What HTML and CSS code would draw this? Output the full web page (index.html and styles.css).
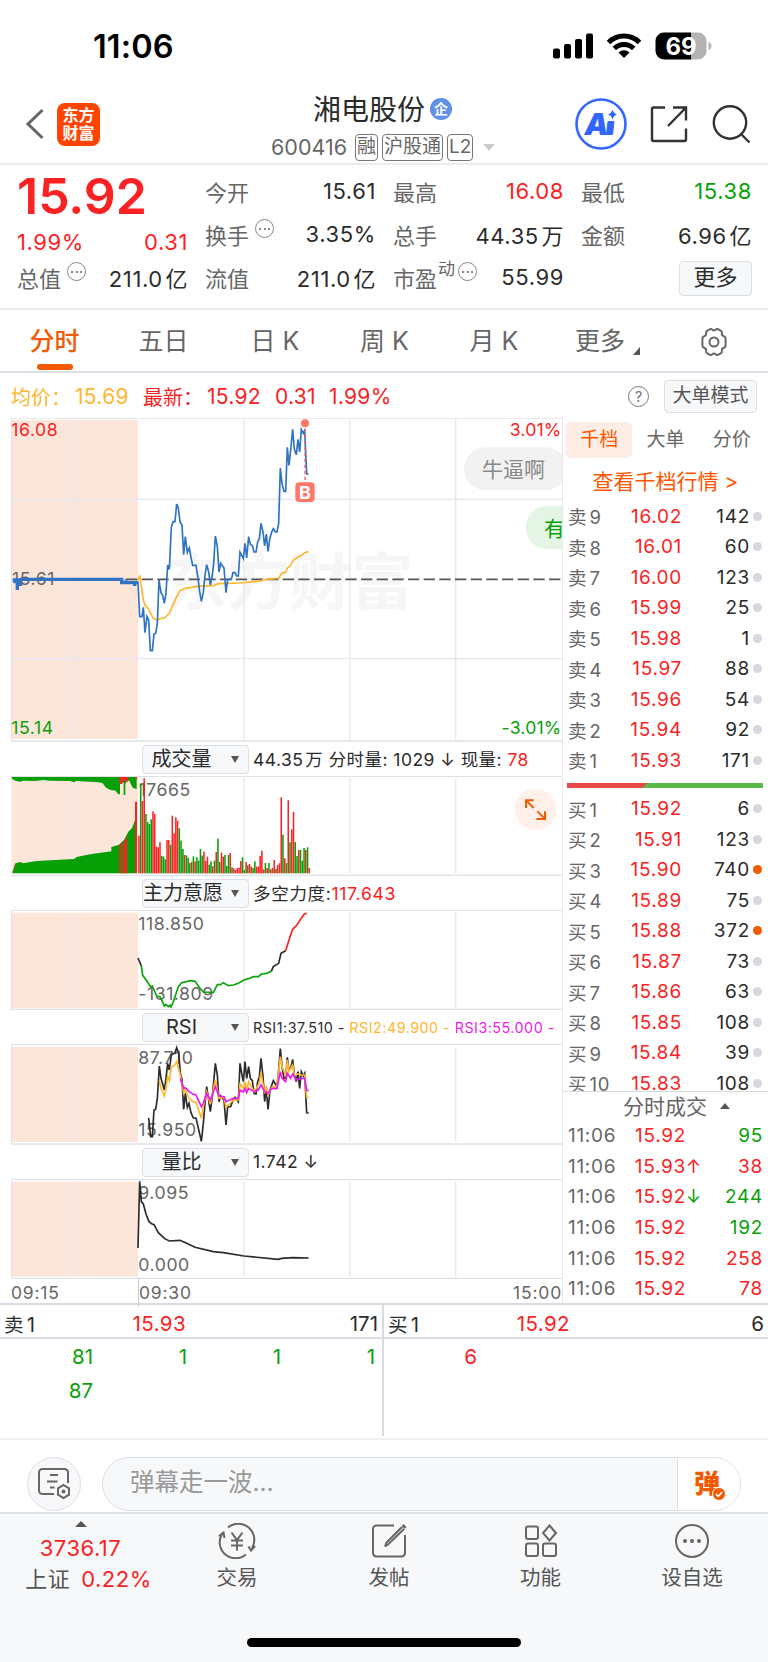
FILE: index.html
```html
<!DOCTYPE html>
<html lang="zh-CN">

<head>
	<meta charset="UTF-8">
	<title>湘电股份 600416</title>
	<link rel="stylesheet" href="styles.css">
</head>

<body>
	<div class="status">
		<span class="clock">11:06</span>
		<div class="status-icons">
			<svg width="40" height="26" viewBox="0 0 40 26">
				<rect x="0" y="15.500" width="7" height="10" rx="2" />
				<rect x="11" y="11" width="7" height="14.500" rx="2" />
				<rect x="22" y="6" width="7" height="19.500" rx="2" />
				<rect x="33" y="0.500" width="7" height="25" rx="2" />
			</svg>
			<svg width="36" height="26" viewBox="0 0 36 26" class="wifi">
				<path d="M2.500 9.500a22 22 0 0 1 31 0" />
				<path d="M8.300 15.500a13.800 13.800 0 0 1 19.400 0" />
				<path d="M18 25l-5.500-5.600a8 8 0 0 1 11 0z" class="solid" />
			</svg>
			<svg width="58" height="28" viewBox="0 0 58 28">
				<path d="M9 .5h34a8.500 8.500 0 0 1 8.500 8.500v10a8.500 8.500 0 0 1-8.500 8.500h-7V.5z" fill="#b3b3b3" />
				<path d="M9 .5h27v27H9A8.500 8.500 0 0 1 .5 19V9A8.500 8.500 0 0 1 9 .5z" />
				<path d="M53.500 10c4 1 4 7 0 8z" fill="#b3b3b3" />
				<text x="26" y="22.500" class="batt">69</text>
			</svg>
		</div>
	</div>

	<div class="head">
		<div class="head-left">
			<svg width="20" height="32" viewBox="0 0 20 32"><path d="M17.500 2L3 16l14.500 14" fill="none" stroke="#666" stroke-width="3" /></svg>
			<div class="logo">东方<br>财富</div>
		</div>
		<div class="head-mid">
			<div class="name">湘电股份<i>企</i></div>
			<div class="code">
				<span>600416</span><b>融</b><b>沪股通</b><b>L2</b>
				<em></em>
			</div>
		</div>
		<div class="head-right">
			<svg width="52" height="52" viewBox="0 0 52 52">
				<circle cx="26" cy="26" r="24.500" fill="none" stroke="#3366ff" stroke-width="2.600" />
				<text x="9.500" y="37" class="ai">A</text>
				<path d="M33 23.500h6l-1.500 13h-6z" fill="#3366ff" stroke="#3366ff" stroke-linejoin="round" />
				<path d="M37.500 11.500q1 4 4.500 5-3.500 1-4.500 5-1-4-4.500-5 3.500-1 4.500-5z" fill="#3366ff" />
			</svg>
			<svg width="38" height="38" viewBox="0 0 38 38" class="line dark">
				<path d="M15 2.500H3.500a1.500 1.500 0 0 0-1.500 1.500v30.500a1.500 1.500 0 0 0 1.500 1.500h31a1.500 1.500 0 0 0 1.500-1.500V23.500M23 2.500h13v13M36 2.500L18 21" />
			</svg>
			<svg width="40" height="40" viewBox="0 0 40 40" class="line dark">
				<circle cx="18" cy="18.500" r="16.200" />
				<path d="M29 30l8.500 8.500" />
			</svg>
		</div>
	</div>

	<div class="quote">
		<div class="price">15.92</div>
		<div class="cell change red"><span>1.99%</span><span>0.31</span></div>
		<div class="cell"><label>总值</label><i class="dots"></i><span>211.0&hairsp;亿</span></div>

		<div class="cell"><label>今开</label><span>15.61</span></div>
		<div class="cell"><label>换手</label><i class="dots"></i><span>3.35%</span></div>
		<div class="cell"><label>流值</label><span>211.0&hairsp;亿</span></div>

		<div class="cell"><label>最高</label><span class="red">16.08</span></div>
		<div class="cell"><label>总手</label><span>44.35&hairsp;万</span></div>
		<div class="cell"><label>市盈</label><sup>动</sup><i class="dots near"></i><span>55.99</span></div>

		<div class="cell"><label>最低</label><span class="green">15.38</span></div>
		<div class="cell"><label>金额</label><span>6.96&hairsp;亿</span></div>
		<div class="cell end"><a class="btn more">更多</a></div>
	</div>

	<div class="tabs">
		<a class="on">分时</a>
		<a>五日</a>
		<a>日 K</a>
		<a>周 K</a>
		<a>月 K</a>
		<a class="drop">更多</a>
		<a class="gear">
			<svg width="30" height="30" viewBox="0 0 30 30" class="line">
				<path d="M11 2.200q1.300-.6 2.200.4 1.800 1.700 3.600 0 .9-1 2.200-.4l3 1.700q1.200.8.900 2.100-.4 2.400 1.900 3.200 1.500.4 1.700 1.800.3 4 0 8-.3 1.400-1.700 1.800-2.300.8-1.900 3.200.3 1.300-.9 2.100l-3 1.700q-1.300.6-2.200-.4-1.800-1.700-3.600 0-.9 1-2.200.4l-3-1.700q-1.200-.8-.9-2.100.4-2.400-1.900-3.200-1.400-.4-1.700-1.800-.3-4 0-8 .3-1.400 1.700-1.800 2.300-.8 1.900-3.200-.3-1.300.9-2.100z" />
				<circle cx="15" cy="15" r="4.500" />
			</svg>
		</a>
	</div>

	<div class="info">
		<span class="avg">均价：</span><span class="avg num">15.69</span>
		<span class="red">最新：</span><span class="red num">15.92</span><span class="red num">0.31</span><span class="red num">1.99%</span>
		<i class="ask">?</i>
		<a class="btn mode">大单模式</a>
	</div>

	<div class="main">
		<div class="charts">
			<!-- 图表坐标统一按 3 倍像素 -->
			<svg class="pane" height="324" viewBox="33 24 1653 972">
				<rect class="pre" x="34" y="30" width="380" height="957" />
				<text x="496" y="584" class="mark">东方财富</text>
				<path class="grid" d="M224 30V987M732 30V987M1050 30V987M1367 30V987M34 268H1686M34 746H1686" />
				<path class="edge" d="M33 24H1686M33 993H1686M34 24V993" />
				<text x="36" y="525" class="lab">15.61</text>
				<path class="dash" d="M378 508H1686" />
				<path class="prel" d="M38 510H62M45 520V512M52 540V512M62 528V512M60 508H365V518H414M378 512V508M404 528V518" />
				<polyline class="avgl" points="414,512 419,496 424,530 430,570 435,585 446,598 460,625 472,630 480,626 493,624 508,610 514,596 530,560 540,542 556,535 590,529 640,527 655,521 720,519 780,513 795,509 836,505 845,490 857,487 862,474 872,466 880,450 904,436 914,428 926,425" />
				<polyline class="pl" points="414,515 419,620 426,620 430,592 435,668 441,620 446,630 451,722 457,722 462,672 467,670 472,640 477,510 483,548 488,556 493,580 498,550 503,465 508,478 514,352 519,335 525,335 530,282 535,294 540,335 546,346 551,434 556,380 562,428 568,414 573,442 578,466 588,466 594,505 599,545 604,574 610,548 615,495 620,464 626,486 631,525 637,495 641,460 646,378 652,410 657,486 662,460 672,474 678,548 683,508 694,508 699,488 705,488 710,498 715,498 720,426 730,446 735,400 740,444 746,380 751,404 757,406 762,426 768,426 773,396 778,386 783,340 789,366 794,408 799,372 804,424 810,384 815,366 820,356 826,366 831,366 836,340 841,174 846,220 852,244 857,244 862,112 867,166 872,120 878,58 883,118 889,134 894,88 899,126 904,58 910,70 914,62 920,192 926,192" />
				<g class="buy">
					<path d="M915 56V216" />
					<circle cx="915" cy="40" r="12" />
					<rect x="886" y="217" width="58" height="59" rx="12" />
					<text x="915" y="268">B</text>
				</g>
				<text x="34" y="77" class="lab r">16.08</text>
				<text x="34" y="972" class="lab g">15.14</text>
				<text x="1684" y="77" class="lab r e">3.01%</text>
				<text x="1684" y="972" class="lab g e">-3.01%</text>
				<rect x="1392" y="112" width="310" height="128" rx="64" fill="#f2f2f2" />
				<text x="1446" y="200" class="bul">牛逼啊</text>
				<rect x="1577" y="288" width="220" height="129" rx="64" fill="#e5f5e5" />
				<text x="1632" y="377" class="bul g">有</text>
			</svg>

			<div class="bar"><a class="btn pick">成交量</a><span>44.35&hairsp;万 分时量: 1029 ↓ 现量: <b class="red">78</b></span></div>
			<svg class="pane" height="100" viewBox="33 108 1653 300">
				<rect class="pre" x="34" y="111" width="380" height="289" />
				<path class="grid" d="M224 114V400M732 114V400M1050 114V400M1367 114V400" />
				<text x="416" y="167" class="lab">17665</text>
				<path fill="#069f06" d="M35 110H410V148L398 143 388 122H385L376 130V165H371V130L360 118V163L355 163 347 152 332 150 318 143 308 130 295 127 228 123 222 127 210 123 150 122 130 120 105 123 70 122 60 125 42 121 35 115z" />
				<path fill="#fa2222" d="M358 110H385L381 128 376 116V132L371 120 366 132H359zM406 110H411V118H406z" />
				<path fill="#069f06" d="M37 398L46 370 60 366 70 370 104 364 124 362 222 357 230 351 255 346 275 342 334 334V321L357 314 372 300 385 275 396 264 405 240V400H37z" />
				<path fill="#fa2222" d="M36 400L46 376V372L44 376zM358 400V313L362 312V400zM364 400V310H369V400zM372 400V299H378V400zM380 400V289H383V400zM405 400V185H411V400z" />
				<g id="vol"></g>
				<path class="edge" d="M33 109H1686M33 406H1686" />
				<circle cx="1606" cy="208" r="62" fill="#fff0ea" />
				<path class="zoom" d="M1601 181H1578V204M1579 182L1601 204M1612 214L1634 236M1635 214V237H1609" />
			</svg>

			<div class="bar wide"><a class="btn pick">主力意愿</a><span>多空力度:<b class="red">117.643</b></span></div>
			<svg class="pane" height="100" viewBox="33 510 1653 300">
				<rect class="pre" x="34" y="518" width="380" height="286" />
				<path class="grid" d="M224 518V804M732 518V804M1050 518V804M1367 518V804" />
				<path class="edge" d="M33 511H1686M33 808H1686M34 511V808" />
				<text x="415" y="569" class="lab">118.850</text>
				<text x="415" y="780" class="lab">-131.809</text>
				<g class="ln">
					<polyline points="414,654 424,678" />
					<polyline stroke="#09a409" points="424,678 428,706 440,722 452,740 457,738 470,768 480,770 493,798 498,793 505,800 510,796 513,801 520,785 535,740 545,728 572,722 585,724 600,745 610,756 640,758 652,734 662,734 670,728 685,737 700,735 715,730 732,720 745,716 760,710 775,710 785,702 800,700 814,694" />
					<polyline points="814,694 820,680 836,670 843,640 857,632" />
					<polyline stroke="#fa2222" points="857,632 870,590 878,568 890,556 900,540 913,522 920,520" />
				</g>
			</svg>

			<div class="bar rsi"><a class="btn pick">RSI</a><span>RSI1:37.510 - <b class="avg">RSI2:49.900 -</b> <b class="pink">RSI3:55.000 -</b></span></div>
			<svg class="pane" height="101" viewBox="33 102 1653 303">
				<rect class="pre" x="34" y="111" width="380" height="285" />
				<path class="grid" d="M224 111V396M732 111V396M1050 111V396M1367 111V396" />
				<path class="edge" d="M33 103H1686M33 402H1686M34 103V402" />
				<text x="415" y="163" class="lab">87.710</text>
				<text x="415" y="378" class="lab">15.950</text>
				<g class="ln">
					<polyline points="446,324 452,380 457,380 462,300 467,298 472,265 478,168 483,205 493,240 498,205 503,160 508,180 514,135 525,128 530,113 536,130 541,190 546,208 551,298 556,250 562,292 567,280 573,308 580,324 588,324 594,350 604,394 610,340 615,280 620,230 631,305 637,260 646,160 652,195 657,275 662,258 672,270 678,345 683,290 692,290 699,270 705,262 715,275 720,160 725,190 730,215 735,155 740,205 746,170 751,205 757,212 762,250 768,252 773,215 778,200 783,145 789,200 794,275 799,235 804,298 810,240 820,212 826,222 831,230 836,180 841,116 846,170 852,205 857,205 862,142 867,180 872,175 878,148 883,195 889,215 894,185 899,235 904,185 910,198 914,190 920,308 926,310" />
					<polyline stroke="#feb62f" points="478,212 483,235 493,258 498,235 503,200 508,212 514,172 525,165 530,155 541,195 551,250 556,240 567,265 580,275 588,277 604,325 612,280 620,245 631,282 646,210 657,265 672,262 678,292 685,285 700,270 715,270 720,222 730,235 735,215 740,240 746,215 762,245 778,220 783,188 794,250 799,228 804,255 815,232 831,228 841,140 846,170 857,195 862,150 867,185 878,165 883,195 894,192 904,195 914,195 920,262 926,262" />
					<polyline stroke="#ea1bea" points="541,205 551,235 556,233 567,244 580,253 588,255 604,290 610,280 620,250 631,270 646,230 657,258 672,260 678,275 700,265 715,265 720,240 730,246 735,235 740,248 746,235 762,245 775,240 783,225 794,245 804,250 815,235 831,236 841,185 846,205 857,215 862,190 872,205 878,192 889,210 904,205 914,205 920,240 926,242" />
				</g>
			</svg>

			<div class="bar"><a class="btn pick">量比</a><span>1.742 ↓</span></div>
			<svg class="pane" height="100" viewBox="33 507 1653 300">
				<rect class="pre" x="34" y="515" width="380" height="285" />
				<path class="grid" d="M224 515V800M732 515V800M1050 515V800M1367 515V800" />
				<path class="edge" d="M33 508H1686M33 805H1686M34 508V805" />
				<text x="415" y="567" class="lab">9.095</text>
				<text x="415" y="782" class="lab">0.000</text>
				<g class="ln">
					<polyline points="414,714 419,514 424,575 430,582 438,612 447,635 455,641 462,644 475,668 494,686 508,693 540,691 560,700 585,712 640,725 670,728 732,738 835,748 845,745 880,743 926,744" />
				</g>
			</svg>
			<div class="axis"><span>09:15</span><span>09:30</span><span>15:00</span></div>
		</div>

		<div class="side">
			<div class="side-tabs"><a class="on">千档</a><a>大单</a><a>分价</a></div>
			<a class="all">查看千档行情 &gt;</a>
			<div class="book">
				<ul id="sell"></ul>
				<div class="ratio"></div>
				<ul id="buy"></ul>
			</div>
			<div class="deal-title">分时成交<i></i></div>
			<ul id="deal"></ul>
		</div>
	</div>

	<div class="queue">
		<div class="half">
			<p><span>卖&thinsp;1</span><span class="red">15.93</span><span>171</span></p>
			<div class="nums green"><span>81</span><span>1</span><span>1</span><span>1</span><span>87</span></div>
		</div>
		<div class="half">
			<p><span>买&thinsp;1</span><span class="red">15.92</span><span>6</span></p>
			<div class="nums red"><span>6</span></div>
		</div>
	</div>

	<div class="talk">
		<a class="set">
			<svg width="34" height="34" viewBox="0 0 34 34" class="line">
				<path d="M31 16V5.500a3.500 3.500 0 0 0-3.500-3.500h-22A3.500 3.500 0 0 0 2 5.500v18A3.500 3.500 0 0 0 5.500 27H17M13 8h8M10 14.500h10.500M13 20.500h4.500" />
				<path d="M26.500 18l5.500 3.300v6.400L26.500 31 21 27.700v-6.400z" />
				<circle cx="26.500" cy="24.500" r="1" />
			</svg>
		</a>
		<div class="input">
			<span>弹幕走一波...</span>
			<a>弹
				<svg width="14" height="14" viewBox="0 0 14 14"><circle cx="7" cy="7" r="6.500" fill="#f15a00" stroke="#fff" /><path d="M4 7l2.300 2.300L10.200 5" fill="none" stroke="#fff" stroke-width="1.600" /></svg>
			</a>
		</div>
	</div>

	<div class="foot">
		<div class="index">
			<i></i>
			<p class="red">3736.17</p>
			<p>上证<span class="red">0.22%</span></p>
		</div>
		<a>
			<svg width="40" height="36" viewBox="0 0 40 36" class="line">
				<path d="M11 4.500A16 16 0 0 1 35 25M29 31.500A16 16 0 0 1 5 11M2 13l4.500-3.500L7.500 15M38 23l-4 4.500-2.500-4" />
				<path d="M14.500 9.500L20 17l5.500-7.500M14 17.500h12M14 22.500h12M20 17v10.500" />
			</svg>
			交易
		</a>
		<a>
			<svg width="36" height="36" viewBox="0 0 36 36" class="line">
				<path d="M23 2.500H5.500A3.500 3.500 0 0 0 2 6v24a3.500 3.500 0 0 0 3.500 3.500h25A3.500 3.500 0 0 0 34 30V12" />
				<path d="M14 23.500l1.500-4L31 4M14 23.500l3-2L33 6" />
				<path d="M32 4.500l2-2" stroke-width="4" />
			</svg>
			发帖
		</a>
		<a>
			<svg width="34" height="36" viewBox="0 0 34 36" class="line">
				<rect x="2" y="3.500" width="12" height="12.500" rx="2" />
				<rect x="2" y="20.500" width="12" height="12.500" rx="2" />
				<rect x="19" y="20.500" width="13" height="12.500" rx="2" />
				<path d="M25.500 2.500l6.500 7.500-6.500 7.500-6.500-7.500z" />
			</svg>
			功能
		</a>
		<a>
			<svg width="36" height="36" viewBox="0 0 36 36" class="line">
				<circle cx="18" cy="18" r="16" />
				<g fill="#666" stroke="none"><circle cx="11" cy="18" r="2" /><circle cx="18" cy="18" r="2" /><circle cx="25" cy="18" r="2" /></g>
			</svg>
			设自选
		</a>
		<div class="home"></div>
	</div>

	<script src="script.js"></script>
</body>

</html>
```

FILE: styles.css
```css
html,
body {
	margin: 0;
}

body {
	width: 768px;
	height: 1662px;
	overflow: hidden;
	background: #fff;
	color: #2b2b2b;
	font-family: Inter, "Noto Sans CJK SC", sans-serif;
}

ul,
p {
	margin: 0;
	padding: 0;
	list-style: none;
}

i,
em {
	font-style: normal;
}

svg {
	display: block;
	flex: none;
}

.red {
	color: #fa2222;
}

.green {
	color: #09a009;
}

.avg {
	color: #feb62f;
}

.pink {
	color: #ea1bea;
}

.line {
	fill: none;
	stroke: #666;
	stroke-width: 2;
}

.dark {
	stroke: #333;
	stroke-width: 2.4;
}

.btn {
	box-sizing: border-box;
	flex: none;
	border: 1px solid #dcdfe6;
	border-radius: 4px;
	background: #f7f8fa;
	text-align: center;
}

/* 状态栏 */
.status {
	height: 92px;
	box-sizing: border-box;
	padding: 0 55px 0 93px;
	display: flex;
	justify-content: space-between;
	align-items: center;
}

.clock {
	font-size: 32.5px;
	font-weight: 600;
	color: #000;
	letter-spacing: 0.1px;
}

.status-icons {
	display: flex;
	gap: 13px;
	align-items: center;
}

.wifi path {
	fill: none;
	stroke: #000;
	stroke-width: 5;
}

.wifi .solid {
	fill: #000;
	stroke: none;
}

.batt {
	font-size: 24px;
	font-weight: 700;
	fill: #fff;
	text-anchor: middle;
}

/* 头部 */
.head {
	height: 73px;
	box-sizing: border-box;
	border-bottom: 2px solid #ececee;
	display: grid;
	grid-template-columns: 271px 1fr 193px;
}

.head-left {
	display: flex;
	align-items: center;
	gap: 12px;
	padding: 0 0 9px 25px;
}

.logo {
	width: 43px;
	height: 43px;
	border-radius: 8px;
	background: #ff4400;
	color: #fff;
	font-size: 16px;
	font-weight: 700;
	line-height: 18px;
	text-align: center;
	padding-top: 3px;
	box-sizing: border-box;
}

.name {
	display: flex;
	align-items: center;
	padding-left: 42px;
	height: 31px;
	font-size: 28px;
	white-space: nowrap;
}

.name i {
	width: 22px;
	height: 22px;
	border-radius: 50%;
	margin-left: 5px;
	margin-top: 2px;
	background: #6090e8;
	color: #fff;
	font-size: 14px;
	font-weight: 700;
	line-height: 21px;
	text-align: center;
}

.code {
	display: flex;
	align-items: center;
	gap: 4px;
	height: 36px;
	margin-top: 6px;
	font-size: 21.5px;
	color: #666;
}

.code span {
	width: 80px;
}

.code b {
	border: 1px solid #777;
	border-radius: 4px;
	height: 25px;
	line-height: 24px;
	font-weight: 400;
	font-size: 19px;
	padding: 0 1px;
}

.code em {
	margin-left: 6px;
	border: 6px solid transparent;
	border-top: 7px solid #ccc;
	border-bottom: 0;
}

.head-right {
	display: flex;
	align-items: center;
	gap: 23px;
	padding-bottom: 9px;
}

.ai {
	font-size: 30px;
	font-weight: 900;
	font-style: italic;
	fill: #3366ff;
}

.head-right svg:last-child {
	margin-left: 1px;
}

/* 行情 */
.quote {
	height: 145px;
	box-sizing: border-box;
	border-bottom: 2px solid #ececee;
	padding: 4px 16px 0 17px;
	display: grid;
	grid-auto-flow: column;
	grid-template-columns: repeat(4, 171px);
	grid-template-rows: repeat(3, 43px);
	column-gap: 17px;
}

.price {
	font-size: 50px;
	font-weight: 600;
	line-height: 54px;
	color: #fa2222;
}

.cell {
	display: flex;
	align-items: center;
	font-size: 22px;
	white-space: nowrap;
}

.cell label {
	color: #666;
}

.cell span {
	margin-left: auto;
	letter-spacing: 0.6px;
}

.change {
	padding-top: 16px;
}

.change span:first-child {
	margin: 0;
}

.dots {
	width: 17px;
	height: 17px;
	border: 1px solid #888;
	border-radius: 50%;
	margin: -10px 0 0 6px;
	background: radial-gradient(circle, #888 1px, transparent 1.5px) center / 4px 4px no-repeat, radial-gradient(circle, #888 1px, transparent 1.5px) 2px center / 4px 4px no-repeat, radial-gradient(circle, #888 1px, transparent 1.5px) 11px center / 4px 4px no-repeat;
}

.dots.near {
	margin-left: 3px;
}

.cell sup {
	font-size: 17px;
	line-height: 17px;
	color: #666;
	margin: -14px 0 0 1px;
}

.end {
	justify-content: flex-end;
}

.more {
	width: 73px;
	height: 35px;
	line-height: 31px;
	margin-top: 3px;
}

/* 周期 */
.tabs {
	height: 63px;
	box-sizing: border-box;
	border-bottom: 2px solid #dcdfe6;
	display: grid;
	grid-template-columns: 109px 109px 114px 105px 114px 98px 119px;
	color: #666;
	font-size: 25px;
	line-height: 63px;
	text-align: center;
}

.tabs a {
	position: relative;
}

.tabs .on {
	color: #f15a00;
	font-weight: 500;
}

.tabs .on::after {
	content: "";
	position: absolute;
	left: 37px;
	bottom: 3px;
	width: 36px;
	height: 6px;
	border-radius: 3px;
	background: #f15a00;
}

.tabs .drop::after {
	content: "";
	position: absolute;
	left: 82px;
	top: 37px;
	border-left: 7px solid transparent;
	border-bottom: 8px solid #555;
}

.gear {
	display: flex;
	justify-content: center;
	align-items: center;
	padding-left: 10px;
}

.info {
	height: 45px;
	display: flex;
	align-items: center;
	padding: 1px 11px 0;
	box-sizing: border-box;
	font-size: 20px;
}

.info span {
	width: 64px;
	white-space: nowrap;
}

.info .num {
	width: 68px;
	font-size: 21px;
	letter-spacing: 0.3px;
}

.info .num:nth-of-type(5) {
	width: 54px;
}

.ask {
	margin-left: auto;
	width: 19px;
	height: 19px;
	border: 1px solid #777;
	border-radius: 50%;
	font-size: 15px;
	line-height: 19px;
	text-align: center;
	color: #777;
}

.mode {
	width: 93px;
	height: 33px;
	margin-left: 15px;
	font-size: 19px;
	line-height: 30px;
	color: #555;
}

/* 主体 */
.main {
	height: 888px;
	box-sizing: border-box;
	border-bottom: 2px solid #d8dbe1;
	display: flex;
	margin-top: -1px;
}

.charts {
	width: 563px;
	padding-left: 11px;
	box-sizing: border-box;
	flex: none;
	padding-top: 1px;
	border-right: 1px solid #e6e8ee;
}

.pane {
	width: 551px;
}

.pre {
	fill: #fce6da;
}

.grid {
	fill: none;
	stroke: #e4e7ee;
	stroke-width: 4;
}

.edge {
	fill: none;
	stroke: #dfe1e6;
	stroke-width: 4;
}

.mark {
	font-size: 186px;
	font-weight: 700;
	fill: #f6f6f6;
}

.lab {
	font-size: 53px;
	letter-spacing: 1.6px;
	fill: #666;
}

.lab.r {
	fill: #fa2222;
}

.g,
.lab.g {
	fill: #09a009;
}

.e {
	text-anchor: end;
	letter-spacing: 0.5px;
}

.dash {
	stroke: #555;
	stroke-width: 5;
	stroke-dasharray: 34 13;
}

.pl,
.avgl,
.prel {
	fill: none;
	stroke: #2f73c2;
	stroke-width: 5;
}

.avgl {
	stroke: #feb62f;
}

.prel {
	stroke-width: 10;
}

.buy {
	fill: #ff7767;
}

.buy path {
	stroke: #f0625a;
	stroke-width: 4;
	stroke-dasharray: 10 8;
}

.buy text {
	fill: #fff;
	font-size: 54px;
	font-weight: 700;
	text-anchor: middle;
}

.bul {
	font-size: 63px;
	fill: #888;
}

.bul.g {
	fill: #09a009;
}

.zoom {
	fill: none;
	stroke: #f15a00;
	stroke-width: 6;
}

.ln {
	fill: none;
	stroke: #2b2b2b;
	stroke-width: 5;
}

.bar {
	height: 34px;
	display: flex;
	align-items: center;
	padding-left: 131px;
	font-size: 17.5px;
	letter-spacing: 0.45px;
	white-space: nowrap;
}

.bar b {
	font-weight: 400;
}

.bar span {
	margin: -2px 0 0 4px;
}

.wide span {
	letter-spacing: 0.7px;
}

.pick {
	width: 107px;
	height: 29px;
	font-size: 20px;
	line-height: 27px;
	letter-spacing: 0;
	padding-right: 28px;
	position: relative;
}

.pick::after {
	content: "";
	position: absolute;
	right: 9px;
	top: 10px;
	border: 4px solid transparent;
	border-top: 7px solid #555;
	border-bottom: 0;
}

.rsi span {
	font-size: 14.3px;
	letter-spacing: 0.5px;
	margin-top: 0;
}

.axis {
	height: 27px;
	display: grid;
	grid-template-columns: 127px 1fr 1fr;
	font-size: 17.5px;
	line-height: 28px;
	letter-spacing: 0.8px;
	color: #666;
}

.axis span:nth-child(2) {
	border-left: 1px solid #ccc;
}

.axis span:last-child {
	text-align: right;
}

/* 五档 */
.side {
	width: 205px;
}

.side-tabs {
	display: flex;
	padding: 5px 3px 0 3px;
	height: 36px;
	font-size: 19px;
	line-height: 36px;
	text-align: center;
	color: #666;
}

.side-tabs a {
	width: 67px;
}

.side-tabs .on {
	border-radius: 5px;
	background: #feede4;
	color: #ff5500;
}

.all {
	display: block;
	height: 43px;
	line-height: 47px;
	font-size: 21px;
	text-align: center;
	color: #ff5500;
}

.book {
	height: 590px;
	overflow: hidden;
	border-bottom: 1px solid #d5d8de;
}

.book li,
#deal li {
	display: grid;
	grid-template-columns: 46px 68px 68px 1fr;
	align-items: center;
	height: 30.5px;
	padding-left: 5px;
	font-size: 19px;
	letter-spacing: 0.7px;
	text-align: right;
}

.book li span:first-child,
#deal li span:first-child {
	text-align: left;
	color: #666;
	font-size: 18.5px;
	white-space: nowrap;
}

.book li::after {
	content: "";
	width: 9px;
	height: 9px;
	margin-left: 3px;
	border-radius: 50%;
	background: #d5d8df;
}

.book .big::after {
	background: #f15a00;
}

.ratio {
	height: 5px;
	margin: 7px 5px 6px 4px;
	background: linear-gradient(135deg, #ea4848 57px, #5bb947 57px);
}

.deal-title {
	height: 28px;
	line-height: 27px;
	font-size: 21px;
	color: #666;
	padding-left: 60px;
	display: flex;
	align-items: center;
	gap: 13px;
}

.deal-title i {
	border: 5px solid transparent;
	border-bottom: 6px solid #555;
	border-top: 0;
}

#deal li {
	grid-template-columns: 52px 66px 13px 64px;
	height: 30.7px;
}

#deal li span:first-child {
	font-size: 19px;
}

#deal em {
	text-align: left;
	font-size: 18px;
}

/* 买卖队列 */
.queue {
	display: flex;
	height: 135px;
	box-sizing: border-box;
	border-bottom: 2px solid #f0f0f2;
	font-size: 20.5px;
}

.half {
	width: 384px;
	height: 131px;
	box-sizing: border-box;
}

.half:first-child {
	border-right: 2px solid #d8dbe1;
}

.half p {
	height: 34px;
	box-sizing: border-box;
	border-bottom: 2px solid #d8dbe1;
	display: grid;
	grid-template-columns: 60px 122px 1fr;
	align-items: center;
	text-align: right;
	padding: 4px 4px 0 4px;
}

.half p span:first-child {
	text-align: left;
	font-size: 19.5px;
}

.half p .red {
	letter-spacing: 0.4px;
}

.nums {
	display: grid;
	grid-template-columns: 93px 94px 94px 94px;
	line-height: 34px;
	padding-top: 1px;
	text-align: right;
}

/* 弹幕输入 */
.talk {
	height: 74px;
	box-sizing: border-box;
	padding: 17px 27px 0;
	border-bottom: 2px solid #dfe1e6;
	display: flex;
	justify-content: space-between;
}

.set {
	width: 54px;
	height: 54px;
	box-sizing: border-box;
	border: 1px solid #dcdfe6;
	border-radius: 50%;
	background: #f7f8fa;
	display: flex;
	align-items: center;
	justify-content: center;
}

.input {
	width: 639px;
	height: 54px;
	box-sizing: border-box;
	border: 1px solid #dcdfe6;
	border-radius: 27px;
	background: #f7f8fa;
	display: flex;
	overflow: hidden;
	color: #999;
	font-size: 24.5px;
	line-height: 48px;
}

.input span {
	flex: 1;
	padding-left: 27px;
}

.input a {
	width: 63px;
	border-left: 1px solid #dcdfe6;
	background: #fff;
	color: #f15a00;
	font-size: 26px;
	font-weight: 900;
	line-height: 51px;
	box-sizing: border-box;
	padding-left: 16px;
	position: relative;
}

.input svg {
	position: absolute;
	left: 34px;
	top: 29px;
}

/* 底部 */
.foot {
	height: 148px;
	background: #f7f8fa;
	display: grid;
	grid-template-columns: 161px 152px 152px 151px 152px;
	grid-template-rows: 110px 38px;
	color: #555;
	font-size: 20.5px;
}

.foot a {
	display: flex;
	flex-direction: column;
	align-items: center;
	gap: 4px;
	padding-top: 9px;
	line-height: 30px;
}

.index {
	text-align: center;
	font-size: 22px;
	line-height: 31px;
	letter-spacing: 0.5px;
	padding: 7px 0 0;
}

.index i {
	display: block;
	width: 0;
	margin: 0 auto 6px;
	border: 6px solid transparent;
	border-bottom: 6px solid #555;
	border-top: 0;
}

.index p:last-child {
	padding-left: 16px;
}

.index p span {
	margin-left: 11px;
}

.home {
	grid-column: 1 / 6;
	justify-self: center;
	width: 274px;
	height: 9px;
	margin-top: 14px;
	border-radius: 5px;
	background: #000;
}
```

FILE: script.js
```js
//成交量：r红 g绿，后面是柱顶的y
let vol = 'r287 g130 r183 r115 g222 g246 g252 g238 r214 r222 r320 r322 r306 g348 g350 g358 r300 r300 g314 r227 r280 r232 r242 g265 g302 g327 r345 g346 g353 g369 r366 g349 r364 g352 g362 g327 g347 r335 r363 r350 g374 g364 r379 g362 r336 g296 g366 r338 r350 g345 g378 g345 r339 g382 r385 r390 r384 r383 r363 g352 g390 r366 g376 r372 r380 g384 g364 r380 r379 r348 r332 r388 g369 r384 g369 r388 r384 r360 g387 r375 r370 r172 g284 r355 g369 r181 g307 r268 r216 g306 g348 r330 g330 g362 g324 r330 g322 r384';

document.getElementById('vol').innerHTML = vol.split(' ').map((item, i) => {
	let y = item.substring(1);
	let color = item[0] === 'r' ? '#fa2222' : '#069f06';
	return `<rect x="${(414.5 + i * 5.27).toFixed(1)}" y="${y}" width="4.6" height="${400 - y}" fill="${color}"/>`;
}).join('');

let sell = [
	['9', '16.02', 142], ['8', '16.01', 60], ['7', '16.00', 123],
	['6', '15.99', 25], ['5', '15.98', 1], ['4', '15.97', 88],
	['3', '15.96', 54], ['2', '15.94', 92], ['1', '15.93', 171]
];
let buy = [
	['1', '15.92', 6], ['2', '15.91', 123], ['3', '15.90', 740],
	['4', '15.89', 75], ['5', '15.88', 372], ['6', '15.87', 73],
	['7', '15.86', 63], ['8', '15.85', 108], ['9', '15.84', 39], ['10', '15.83', 108]
];
let deal = [
	['15.92', '', 95, 'green'], ['15.93', '↑', 38, 'red'], ['15.92', '↓', 244, 'green'],
	['15.92', '', 192, 'green'], ['15.92', '', 258, 'red'], ['15.92', '', 78, 'red']
];

function render(list, name) {
	return list.map(item => `<li class="${item[2] > 300 ? 'big' : ''}"><span>${name}&hairsp;${item[0]}</span><span class="red">${item[1]}</span><span>${item[2]}</span></li>`).join('');
}

document.getElementById('sell').innerHTML = render(sell, '卖');
document.getElementById('buy').innerHTML = render(buy, '买');
document.getElementById('deal').innerHTML = deal.map(item => `<li><span>11:06</span><span class="red">${item[0]}</span><em class="${item[3]}">${item[1]}</em><span class="${item[3]}">${item[2]}</span></li>`).join('');
```
